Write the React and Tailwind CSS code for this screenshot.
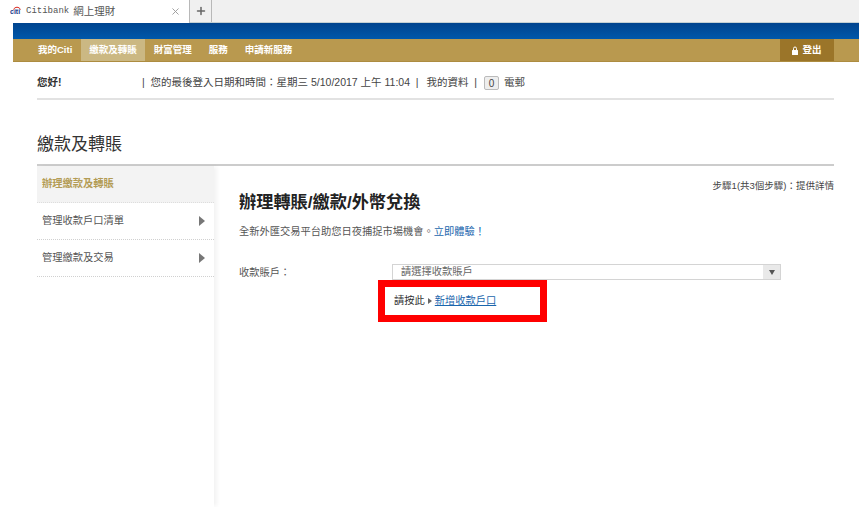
import { X, Plus } from 'lucide-react';

const cjk = { fontFamily: '"Liberation Sans", "Noto Sans CJK TC", sans-serif' };

function Tabs() {
    return (
        <div className="flex h-[23px] bg-[#f0f0f0] border-b border-[#c4d0d4]">
            <div className="w-[190px] h-[23px] bg-white border-r border-[#b8b8b8] flex items-center pl-[10px] pr-[8px] text-[#555]">
                <span className="relative w-[16px] text-[7px] font-bold text-[#1a3a8a] leading-none">
                    citi
                    <svg className="absolute left-[3px] -top-[2px]" width="8" height="4" viewBox="0 0 8 4">
                        <path d="M0.5 3.5C2 0.5 6 0.5 7.5 3.5" fill="none" stroke="#d9261c" strokeWidth="1" />
                    </svg>
                </span>
                <span className="font-['Liberation_Mono'] text-[9px] mr-[4px]">Citibank</span>
                <span className="text-[10.5px]">網上理財</span>
                <X className="ml-auto text-[#999]" size={11} />
            </div>
            <div className="w-[22px] border-r border-[#b8b8b8] flex items-center justify-center text-[#666]">
                <Plus size={12} strokeWidth={3} />
            </div>
        </div>
    );
}

function TopNav() {
    const items = ['我的Citi', '繳款及轉賬', '財富管理', '服務', '申請新服務'];
    return (
        <div className="ml-[13px]">
            <div className="h-[16px] bg-gradient-to-b from-[#00448f] to-[#0058aa]" />
            <div className="h-[23px] bg-[#b9994f] border-b border-[#ad8c40] flex text-[9.5px] font-bold text-white pl-[16.5px]">
                {items.map((t, i) => (
                    <div key={t} className={`flex items-center px-[8.5px] ${i === 1 ? 'bg-[#cbb883]' : ''}`}>{t}</div>
                ))}
                <div className="ml-auto mr-[25px] w-[54px] bg-[#9b7529] flex items-center justify-center gap-[4px]">
                    <svg width="6" height="9" viewBox="0 0 6 9">
                        <path d="M1.5 4V2.5a1.5 1.5 0 0 1 3 0V4" fill="none" stroke="white" strokeWidth="1" />
                        <rect x="0" y="4" width="6" height="5" rx="0.5" fill="white" />
                    </svg>
                    <span>登出</span>
                </div>
            </div>
        </div>
    );
}

function Sidebar() {
    return (
        <div className="w-[177px] shrink-0 shadow-[4px_0_4px_-1px_rgba(0,0,0,0.05)] text-[10.25px] text-[#555]">
            <div className="h-[37px] bg-[#f3f3f3] border-b border-dotted border-[#ddd] flex items-center pl-[5px] text-[#b39c55] font-bold">辦理繳款及轉賬</div>
            {['管理收款戶口清單', '管理繳款及交易'].map(t => (
                <div key={t} className="h-[37px] border-b border-dotted border-[#d0d0d0] flex items-center justify-between pl-[5px] pr-[9px]">
                    <span>{t}</span>
                    <span className="border-y-[5px] border-l-[6px] border-y-transparent border-l-[#777]" />
                </div>
            ))}
        </div>
    );
}

export default function App() {
    return (
        <div className="h-[507px] overflow-hidden bg-white relative" style={cjk}>
            <Tabs />
            <TopNav />
            <div className="ml-[37px] w-[797px]">
                <div className="h-[38px] border-b-2 border-[#e2e2e2] flex items-center text-[10.5px] text-[#444] pt-[6px]">
                    <span className="font-bold w-[105px] text-[#333]">您好!</span>
                    <span>|&nbsp;&nbsp;您的最後登入日期和時間：星期三 5/10/2017 上午 11:04&nbsp;&nbsp;|&nbsp;&nbsp;</span>
                    <span className="ml-[2px]">我的資料&nbsp;&nbsp;|&nbsp;</span>
                    <span className="w-[15px] h-[14px] ml-[4px] mr-[2px] border border-[#bbb] rounded-[2px] bg-[#eee] flex items-center justify-center text-[10px]">0</span>
                    <span className="ml-[3px]">電郵</span>
                </div>
                <h1 className="pt-[31px] h-[33px] text-[17px] leading-[28px] text-[#333] border-b-2 border-[#ccc] box-content">繳款及轉賬</h1>
                <div className="flex h-[341px]">
                    <Sidebar />
                    <div className="flex-1 relative pl-[25px] text-[#555] text-[10.25px]">
                        <div className="text-right text-[9.5px] text-[#444] pt-[14px] leading-[12px]">步驟1(共3個步驟)：提供詳情</div>
                        <h2 className="text-[17.2px] leading-[24px] font-bold text-[#222] -mt-[2px]">辦理轉賬/繳款/外幣兌換</h2>
                        <p className="mt-[11px] leading-[14px]">全新外匯交易平台助您日夜捕捉市場機會。<span className="text-[#1a66ad]">立即體驗！</span></p>
                        <div className="flex mt-[25px] h-[16px]">
                            <span className="w-[153px] leading-[18px]">收款賬戶：</span>
                            <div className="w-[389px] border border-[#d4d4d4] flex items-center justify-between">
                                <span className="pl-[8px] text-[#666]">請選擇收款賬戶</span>
                                <span className="w-[17px] h-full bg-[#e9e9e9] flex items-center justify-center">
                                    <span className="border-x-[3px] border-t-[5px] border-x-transparent border-t-[#555]" />
                                </span>
                            </div>
                        </div>
                        <div className="mt-[9px] pl-[155px] flex items-center text-[#333] leading-[24px]">
                            請按此
                            <span className="mx-[3px] border-y-[3px] border-l-[4px] border-y-transparent border-l-[#666]" />
                            <span className="text-[#1a66ad] underline">新增收款戶口</span>
                        </div>
                    </div>
                </div>
            </div>
            <div className="absolute left-[378px] top-[280px] w-[169px] h-[42px] border-[7px] border-[#ff0000]" />
        </div>
    );
}
